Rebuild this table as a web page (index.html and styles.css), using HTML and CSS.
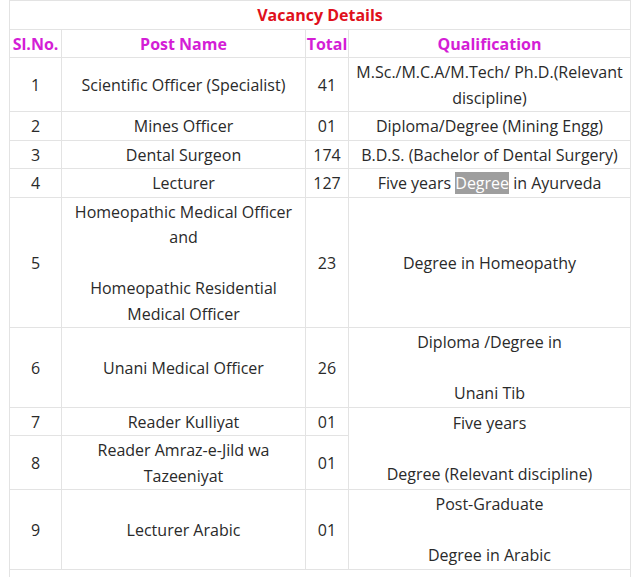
FILE: index.html
```html
<!DOCTYPE html>
<html lang="en">
<head>
<meta charset="utf-8">
<title>Vacancy Details</title>
<link rel="stylesheet" href="styles.css">
</head>
<body>
<table class="vacancy">
  <colgroup>
    <col class="c-sl">
    <col class="c-post">
    <col class="c-total">
    <col class="c-qual">
  </colgroup>
  <tr class="title-row"><td colspan="4" class="title">Vacancy Details</td></tr>
  <tr class="head-row">
    <td class="head">Sl.No.</td>
    <td class="head">Post Name</td>
    <td class="head">Total</td>
    <td class="head">Qualification</td>
  </tr>
  <tr><td>1</td><td>Scientific Officer (Specialist)</td><td>41</td><td>M.Sc./M.C.A/M.Tech/ Ph.D.(Relevant discipline)</td></tr>
  <tr><td>2</td><td>Mines Officer</td><td>01</td><td>Diploma/Degree (Mining Engg)</td></tr>
  <tr><td>3</td><td>Dental Surgeon</td><td>174</td><td>B.D.S. (Bachelor of Dental Surgery)</td></tr>
  <tr><td>4</td><td>Lecturer</td><td>127</td><td>Five years <span class="sel">Degree</span> in Ayurveda</td></tr>
  <tr><td>5</td><td>Homeopathic Medical Officer<br>and<br><br>Homeopathic Residential Medical Officer</td><td>23</td><td>Degree in Homeopathy</td></tr>
  <tr><td>6</td><td>Unani Medical Officer</td><td>26</td><td>Diploma /Degree in<br><br>Unani Tib</td></tr>
  <tr><td>7</td><td>Reader Kulliyat</td><td>01</td><td rowspan="2">Five years<br><br>Degree (Relevant discipline)</td></tr>
  <tr><td>8</td><td>Reader Amraz-e-Jild wa Tazeeniyat</td><td>01</td></tr>
  <tr><td>9</td><td>Lecturer Arabic</td><td>01</td><td>Post-Graduate<br><br>Degree in Arabic</td></tr>
  <tr><td colspan="4" class="note">&nbsp;</td></tr>
</table>
</body>
</html>
```
FILE: styles.css
```css
html, body {
  margin: 0;
  padding: 0;
  background: #ffffff;
}
body {
  font-family: "Open Sans", "Noto Sans", sans-serif;
  font-size: 16px;
  color: #2a2a2a;
}
.vacancy {
  margin-left: 9px;
  width: 621px;
  border-collapse: collapse;
  table-layout: fixed;
}
.c-sl { width: 52px; }
.c-post { width: 244px; }
.c-total { width: 43px; }
.c-qual { width: 282px; }
.vacancy td {
  border: 1px solid #e3e3e3;
  text-align: center;
  vertical-align: middle;
  line-height: 25.5px;
  padding: 2px 3px 0 3px;
}
.title {
  color: #e0101c;
  font-weight: 700;
}
.head {
  color: #d41ed6;
  font-weight: 700;
}
.vacancy .head:first-child,
.vacancy .head:nth-child(3) {
  padding: 2px 0 0 0;
}
.sel {
  background: #9e9e9e;
  color: #ffffff;
}
.note {
  height: 40px;
}
```
